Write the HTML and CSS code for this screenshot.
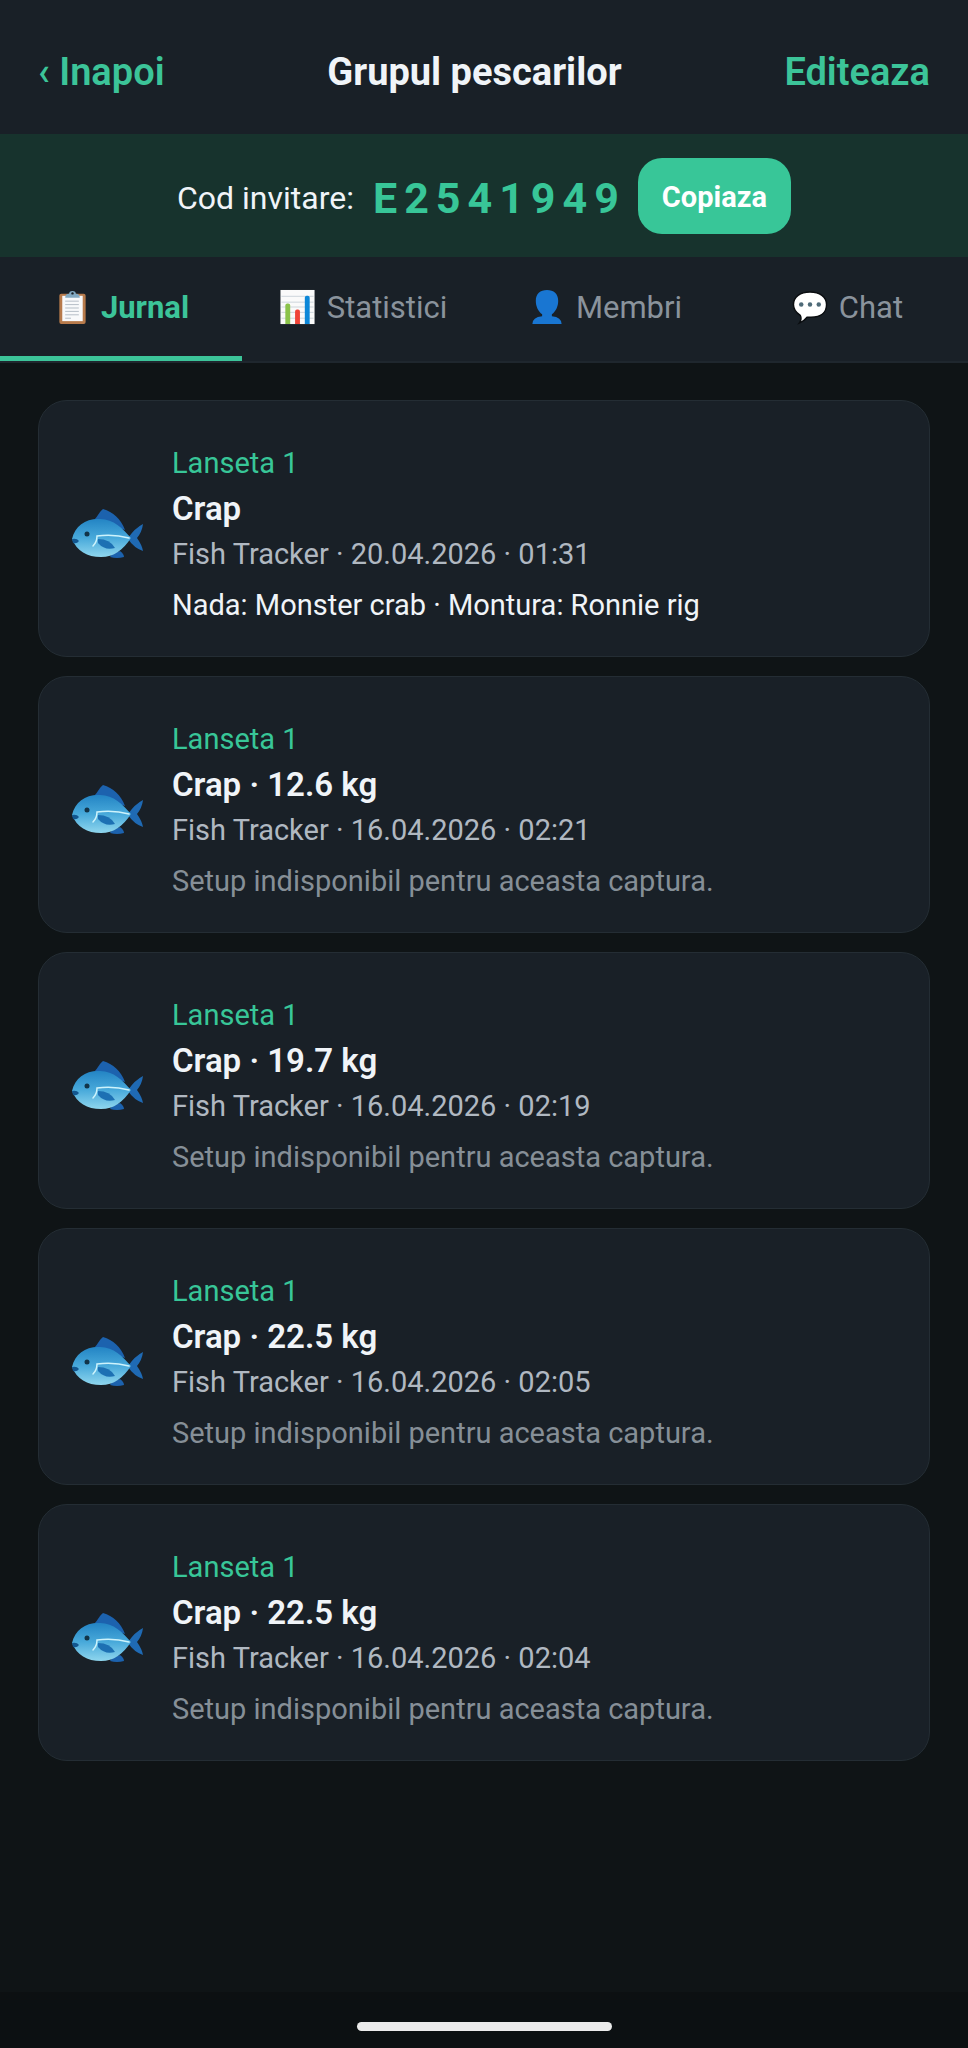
FILE: index.html
```html
<!DOCTYPE html>
<html lang="ro">
<head>
    <meta charset="UTF-8">
    <meta name="viewport" content="width=device-width, initial-scale=1.0">
    <title>Grupul pescarilor</title>
    <link rel="stylesheet" href="styles.css">
</head>
<body>
    <!-- Shared fish icon -->
    <svg class="defs" width="0" height="0" aria-hidden="true">
        <defs>
            <linearGradient id="fishBody" x1="0" y1="0" x2="0" y2="1">
                <stop offset="0" stop-color="#2384c4"/>
                <stop offset="0.5" stop-color="#48a9da"/>
                <stop offset="1" stop-color="#8fd6ee"/>
            </linearGradient>
            <symbol id="fish" viewBox="0 0 72 52">
                <path d="M23 12 C27 8 29 3 32 1 C42 4 50 11 54 22 Z" fill="#1c62ae"/>
                <path d="M41 46 L49 43 Q53 46 53 49 Q46 51 39 49 Z" fill="#1c62ae"/>
                <path d="M57 30 Q64 20 72 16 Q71 24 66 30 Q71 37 72 43 Q63 40 57 31 Z" fill="#1f6ab4"/>
                <path d="M1 31 C4 18 14 11 27 11 C42 10 51 20 60 30 C52 42 43 49 30 49 C16 49 6 43 1 31 Z" fill="url(#fishBody)"/>
                <path d="M1 31 Q6 30 8 33 Q6 36 2 35 Z" fill="#12568f"/>
                <circle cx="16" cy="26" r="2.500" fill="#123449"/>
                <path d="M22 38 Q26 34 26 28 Q43 26 58 30" fill="none" stroke="#cdf3fc" stroke-width="1.500" stroke-linecap="round"/>
                <path d="M27 31 Q39 31 44 40 Q34 43 27 35 Z" fill="#1d70b3"/>
            </symbol>
        </defs>
    </svg>

    <header class="header">
        <a href="#" class="header-link">‹ Inapoi</a>
        <h1>Grupul pescarilor</h1>
        <a href="#" class="header-link">Editeaza</a>
    </header>

    <div class="invite">
        <span class="invite-label">Cod invitare:</span>
        <span class="invite-code">E2541949</span>
        <button type="button" class="copy-btn">Copiaza</button>
    </div>

    <nav class="tabs">
        <button type="button" class="tab active">
            <svg class="tab-icon" viewBox="0 0 38 38" aria-hidden="true">
                <rect x="6" y="5" width="27" height="31" rx="2" fill="#b77a4b"/>
                <path d="M9 7 H30 V33 H9 Z" fill="#f8f9fb"/>
                <path d="M12 12.5 H26 M12 16 H26 M12 19.5 H26 M12 23 H26 M12 26.500 H26 M12 30 H18" stroke="#b4bcc5" stroke-width="1"/>
                <path d="M12 9 Q12 5 16 5 Q16 2 19.500 2 Q23 2 23 5 Q27 5 27 9 Z" fill="#82a9c2"/>
                <circle cx="19.500" cy="4.500" r="1.200" fill="#192027"/>
            </svg>
            Jurnal
        </button>
        <button type="button" class="tab">
            <svg class="tab-icon" viewBox="0 0 38 38" aria-hidden="true">
                <rect x="1" y="1" width="35" height="35" fill="#fafafa"/>
                <path d="M2 7.500 H35 M2 13.500 H35 M2 18.500 H35 M2 24 H35 M2 30 H35" stroke="#ccd4da" stroke-width="1"/>
                <path d="M6 36 V17 Q6 15 8 15 H9 Q11 15 11 17 V36 Z" fill="#8bc34a"/>
                <path d="M16 36 V23 Q16 21 18 21 H19 Q21 21 21 23 V36 Z" fill="#f04438"/>
                <path d="M26 36 V9 Q26 7 28 7 H29 Q31 7 31 9 V36 Z" fill="#0c87d8"/>
            </svg>
            Statistici
        </button>
        <button type="button" class="tab">
            <svg class="tab-icon" viewBox="0 0 38 38" aria-hidden="true">
                <path d="M19 1 C26 1 30.500 5 30.500 12 C30.500 18 28 23 24 26 V28 Q34 29 34 36 H4 Q4 29 14 28 V26 C10 23 7.500 18 7.500 12 C7.500 5 12 1 19 1 Z" fill="#1976d2"/>
            </svg>
            Membri
        </button>
        <button type="button" class="tab">
            <svg class="tab-icon" viewBox="0 0 38 38" aria-hidden="true">
                <path d="M19 3 C29 3 36 8 36 16 C36 25 29 29 20 29 L16 29 Q13 33 8 35 Q11 31 9 27 C4 24 2 21 2 16 C2 8 9 3 19 3 Z" fill="#ffffff" stroke="#0a0d10" stroke-width="1.500"/>
                <circle cx="10" cy="16" r="2.300" fill="#4e6a78"/>
                <circle cx="19" cy="16" r="2.300" fill="#4e6a78"/>
                <circle cx="28" cy="16" r="2.300" fill="#4e6a78"/>
            </svg>
            Chat
        </button>
    </nav>

    <main class="journal">
        <article class="card">
            <svg class="fish"><use href="#fish"/></svg>
            <div class="card-body">
                <p class="rod">Lanseta 1</p>
                <h2>Crap</h2>
                <p class="meta">Fish Tracker · 20.04.2026 · 01:31</p>
                <p class="setup">Nada: Monster crab · Montura: Ronnie rig</p>
            </div>
        </article>
        <article class="card">
            <svg class="fish"><use href="#fish"/></svg>
            <div class="card-body">
                <p class="rod">Lanseta 1</p>
                <h2>Crap · 12.6 kg</h2>
                <p class="meta">Fish Tracker · 16.04.2026 · 02:21</p>
                <p class="setup missing">Setup indisponibil pentru aceasta captura.</p>
            </div>
        </article>
        <article class="card">
            <svg class="fish"><use href="#fish"/></svg>
            <div class="card-body">
                <p class="rod">Lanseta 1</p>
                <h2>Crap · 19.7 kg</h2>
                <p class="meta">Fish Tracker · 16.04.2026 · 02:19</p>
                <p class="setup missing">Setup indisponibil pentru aceasta captura.</p>
            </div>
        </article>
        <article class="card">
            <svg class="fish"><use href="#fish"/></svg>
            <div class="card-body">
                <p class="rod">Lanseta 1</p>
                <h2>Crap · 22.5 kg</h2>
                <p class="meta">Fish Tracker · 16.04.2026 · 02:05</p>
                <p class="setup missing">Setup indisponibil pentru aceasta captura.</p>
            </div>
        </article>
        <article class="card">
            <svg class="fish"><use href="#fish"/></svg>
            <div class="card-body">
                <p class="rod">Lanseta 1</p>
                <h2>Crap · 22.5 kg</h2>
                <p class="meta">Fish Tracker · 16.04.2026 · 02:04</p>
                <p class="setup missing">Setup indisponibil pentru aceasta captura.</p>
            </div>
        </article>
    </main>

    <footer class="home-bar">
        <div class="home-pill"></div>
    </footer>
</body>
</html>
```

FILE: styles.css
```css
* {
    box-sizing: border-box;
}

body {
    margin: 0;
    min-height: 100vh;
    display: flex;
    flex-direction: column;
    font-family: Roboto, "Liberation Sans", sans-serif;
    background: #0f1416;
    color: #f0f4f8;
}

h1, h2, p {
    margin: 0;
}

button {
    font-family: inherit;
    border: none;
    cursor: pointer;
}

.defs {
    position: absolute;
}

/* Header */
.header {
    display: flex;
    justify-content: space-between;
    align-items: center;
    padding: 49px 38px 39px;
    background: #192027;
    font-size: 38px;
    line-height: 46px;
}

.header h1 {
    font-size: 38px;
    font-weight: 700;
}

.header-link {
    color: #3cc499;
    font-weight: 600;
    text-decoration: none;
}

/* Invite code */
.invite {
    display: flex;
    justify-content: center;
    align-items: center;
    gap: 19px;
    padding: 24px 38px 23px;
    background: #17332d;
}

.invite-label,
.invite-code {
    padding-top: 3px;
}

.invite-label {
    font-size: 32px;
}

.invite-code {
    margin-right: -7px;
    color: #38c698;
    font-size: 43px;
    font-weight: 700;
    letter-spacing: 7px;
}

.copy-btn {
    padding: 21px 24px 19px;
    border-radius: 24px;
    background: #38c698;
    color: #ffffff;
    font-size: 29px;
    font-weight: 700;
    line-height: 36px;
}

/* Tabs */
.tabs {
    display: grid;
    grid-template-columns: repeat(4, 1fr);
    background: #192027;
    border-bottom: 2px solid #1f272e;
}

.tab {
    display: flex;
    justify-content: center;
    align-items: center;
    gap: 10px;
    padding: 32px 0 30px;
    background: none;
    border-bottom: 5px solid transparent;
    color: #8a939c;
    font-size: 31px;
    line-height: 37px;
}

.tab.active {
    color: #3cc499;
    font-weight: 700;
    border-bottom-color: #3cc499;
}

.tab-icon {
    width: 38px;
    height: 37px;
}

/* Catches */
.journal {
    display: flex;
    flex-direction: column;
    gap: 19px;
    padding: 37px 38px;
}

.card {
    display: flex;
    align-items: center;
    gap: 29px;
    padding: 45px 32px 34px;
    background: #192027;
    border: 1px solid #242d34;
    border-radius: 29px;
}

.fish {
    flex: none;
    width: 72px;
    height: 52px;
}

.card-body {
    display: flex;
    flex-direction: column;
    gap: 9px;
    font-size: 29px;
    line-height: 34px;
}

.rod {
    color: #38c698;
}

.card h2 {
    font-size: 33px;
    font-weight: 600;
    line-height: 39px;
}

.meta {
    color: #b0b8c1;
}

.setup {
    padding-top: 8px;
}

.missing {
    color: #868f97;
}

/* System home indicator */
.home-bar {
    display: flex;
    justify-content: center;
    margin-top: auto;
    padding: 30px 0 17px;
    background: #0c1012;
}

.home-pill {
    width: 255px;
    height: 9px;
    border-radius: 5px;
    background: #ebebeb;
}
```
